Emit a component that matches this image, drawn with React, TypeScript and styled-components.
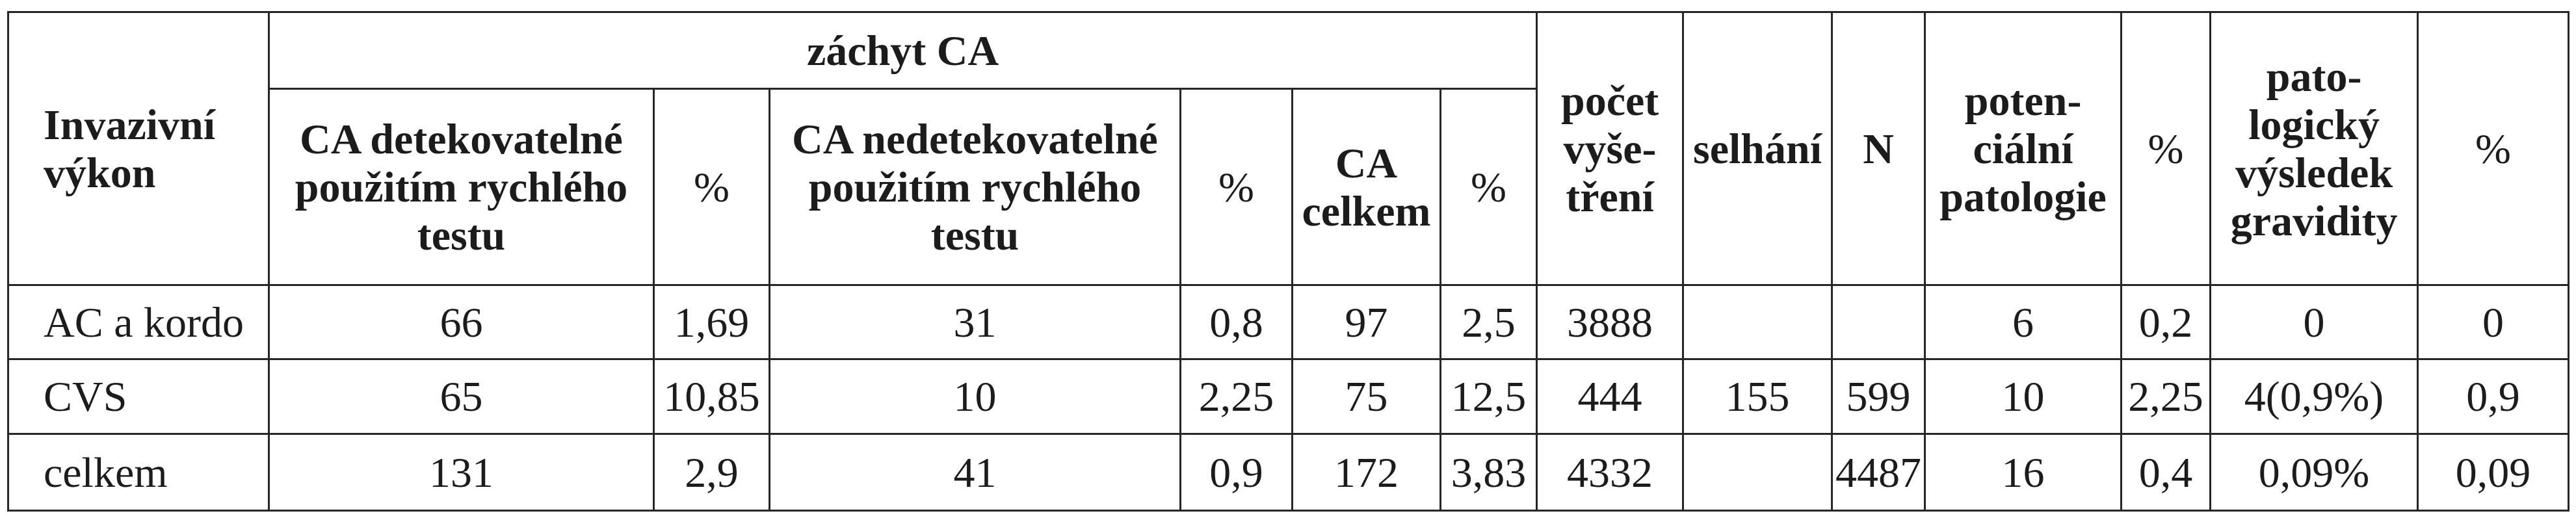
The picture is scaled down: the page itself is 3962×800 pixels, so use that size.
import React from "react";
import styled, { createGlobalStyle } from "styled-components";

const Global = createGlobalStyle`
  html, body { margin: 0; padding: 0; background: #ffffff; }
  body { font-family: "Liberation Serif", "Times New Roman", serif; color: #1c1c1c; }
`;

const Page = styled.div`
  padding: 17px 0 0 11px;
`;

const Table = styled.table`
  border-collapse: collapse;
  table-layout: fixed;
  width: 3938px;
  font-family: "Liberation Serif", "Times New Roman", serif;
  font-size: 66px;
  line-height: 74px;
  color: #1c1c1c;
`;

const Row = styled.tr<{ $h: number }>`
  height: ${(p) => p.$h}px;
`;

const HeadCell = styled.th<{ $left?: boolean; $light?: boolean }>`
  border: 3px solid #262626;
  padding: 0 ${(p) => (p.$left ? "0 0 53px" : "0")};
  padding-left: ${(p) => (p.$left ? "53px" : "0")};
  text-align: ${(p) => (p.$left ? "left" : "center")};
  vertical-align: middle;
  font-weight: ${(p) => (p.$light ? 400 : 700)};
`;

const Cell = styled.td<{ $left?: boolean }>`
  border: 3px solid #262626;
  padding: 0;
  padding-left: ${(p) => (p.$left ? "53px" : "0")};
  text-align: ${(p) => (p.$left ? "left" : "center")};
  vertical-align: middle;
  font-weight: 400;
  white-space: nowrap;
`;

const widths = [401, 592, 178, 632, 172, 228, 148, 225, 229, 143, 302, 137, 319, 232];

const rows: string[][] = [
  ["AC a kordo", "66", "1,69", "31", "0,8", "97", "2,5", "3888", "", "", "6", "0,2", "0", "0"],
  ["CVS", "65", "10,85", "10", "2,25", "75", "12,5", "444", "155", "599", "10", "2,25", "4(0,9%)", "0,9"],
  ["celkem", "131", "2,9", "41", "0,9", "172", "3,83", "4332", "", "4487", "16", "0,4", "0,09%", "0,09"],
];
const rowHeights = [114, 115, 118];

export default function App() {
  return (
    <Page>
      <Global />
      <Table>
        <colgroup>
          {widths.map((w, i) => (
            <col key={i} style={{ width: w }} />
          ))}
        </colgroup>
        <thead>
          <Row $h={118}>
            <HeadCell rowSpan={2} $left>
              Invazivní
              <br />
              výkon
            </HeadCell>
            <HeadCell colSpan={6}>záchyt CA</HeadCell>
            <HeadCell rowSpan={2}>
              počet
              <br />
              vyše-
              <br />
              tření
            </HeadCell>
            <HeadCell rowSpan={2}>selhání</HeadCell>
            <HeadCell rowSpan={2}>N</HeadCell>
            <HeadCell rowSpan={2}>
              poten-
              <br />
              ciální
              <br />
              patologie
            </HeadCell>
            <HeadCell rowSpan={2} $light>
              %
            </HeadCell>
            <HeadCell rowSpan={2}>
              pato-
              <br />
              logický
              <br />
              výsledek
              <br />
              gravidity
            </HeadCell>
            <HeadCell rowSpan={2} $light>
              %
            </HeadCell>
          </Row>
          <Row $h={302}>
            <HeadCell>
              CA detekovatelné
              <br />
              použitím rychlého
              <br />
              testu
            </HeadCell>
            <HeadCell $light>%</HeadCell>
            <HeadCell>
              CA nedetekovatelné
              <br />
              použitím rychlého
              <br />
              testu
            </HeadCell>
            <HeadCell $light>%</HeadCell>
            <HeadCell>
              CA
              <br />
              celkem
            </HeadCell>
            <HeadCell $light>%</HeadCell>
          </Row>
        </thead>
        <tbody>
          {rows.map((r, i) => (
            <Row key={i} $h={rowHeights[i]}>
              {r.map((v, j) => (
                <Cell key={j} $left={j === 0}>
                  {v}
                </Cell>
              ))}
            </Row>
          ))}
        </tbody>
      </Table>
    </Page>
  );
}
